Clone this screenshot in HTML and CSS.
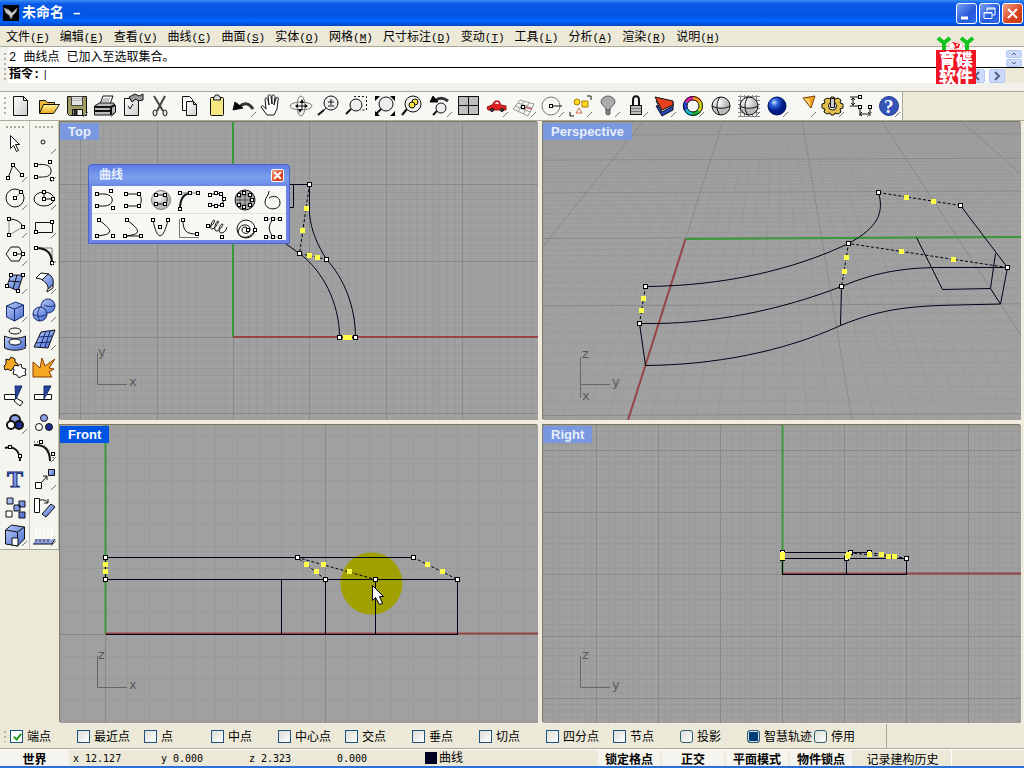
FILE: index.html
```html
<!DOCTYPE html>
<html lang="zh-CN">
<head>
    <meta charset="UTF-8">
    <meta name="viewport" content="width=device-width, initial-scale=1.0">
    <title>未命名</title>
    <link rel="stylesheet" href="styles.css">
</head>
<body>
    <svg class="defs" width="0" height="0">
        <defs>
            <rect id="pt" x="-1.5" y="-1.5" width="3" height="3" fill="#fff" stroke="#000"/>
            <rect id="handle" x="-2" y="-2" width="4" height="4" fill="#fff" stroke="#000" shape-rendering="crispEdges"/>
            <rect id="sel" x="-2" y="-2" width="5" height="5" fill="#ffff4a" stroke="none"/>
            <linearGradient id="blue" x2="1" y2="1"><stop offset="0" stop-color="#b9cbf8"/><stop offset="1" stop-color="#4a6cd0"/></linearGradient>
            <linearGradient id="paper" x2="1" y2="1"><stop offset="0" stop-color="#fff"/><stop offset="1" stop-color="#ccc"/></linearGradient>
            <linearGradient id="gold" x2="0" y2="1"><stop offset="0" stop-color="#fff39a"/><stop offset="1" stop-color="#f2a818"/></linearGradient>
            <radialGradient id="ball" cx=".35" cy=".3"><stop offset="0" stop-color="#fff"/><stop offset="1" stop-color="#bbb"/></radialGradient>
            <radialGradient id="blueball" cx=".35" cy=".3"><stop offset="0" stop-color="#cfe0ff"/><stop offset=".4" stop-color="#2f62e0"/><stop offset="1" stop-color="#001a80"/></radialGradient>
        </defs>
    </svg>

    <header class="titlebar">
        <svg class="app-icon" width="16" height="16"><rect width="16" height="16" fill="#000" stroke="none"/><path d="M1 3l5 2 3 3 5-5-1 4-3 3-2 4-2-4-3-2z" fill="#ccc" stroke="#777"/></svg>
        <h1>未命名 –</h1>
        <div class="window-buttons">
            <button aria-label="最小化"><svg width="19" height="19"><path d="M4 14h7" stroke="#fff" stroke-width="3"/></svg></button>
            <button aria-label="还原"><svg width="19" height="19"><path d="M7 7V4h8v7h-3M7 5h8M4 8.5h8v6H4zM4 9h8" stroke="#fff"/></svg></button>
            <button class="close" aria-label="关闭"><svg width="19" height="19"><path d="M5 5l9 9M14 5l-9 9" stroke="#fff" stroke-width="2"/></svg></button>
        </div>
    </header>

    <nav class="menubar">
        <a href="#">文件<span>(<u>F</u>)</span></a>
        <a href="#">编辑<span>(<u>E</u>)</span></a>
        <a href="#">查看<span>(<u>V</u>)</span></a>
        <a href="#">曲线<span>(<u>C</u>)</span></a>
        <a href="#">曲面<span>(<u>S</u>)</span></a>
        <a href="#">实体<span>(<u>O</u>)</span></a>
        <a href="#">网格<span>(<u>M</u>)</span></a>
        <a href="#">尺寸标注<span>(<u>D</u>)</span></a>
        <a href="#">变动<span>(<u>T</u>)</span></a>
        <a href="#">工具<span>(<u>L</u>)</span></a>
        <a href="#">分析<span>(<u>A</u>)</span></a>
        <a href="#">渲染<span>(<u>R</u>)</span></a>
        <a href="#">说明<span>(<u>H</u>)</span></a>
    </nav>

    <section class="command">
        <div class="grip"></div>
        <div class="command-lines">
            <div class="history">
                <p>2 曲线点 已加入至选取集合。</p>
                <div class="spin">
                    <button aria-label="上"><svg width="14" height="6"><path d="M5 4l2-2 2 2" stroke="#4d6185"/></svg></button>
                    <button aria-label="下"><svg width="14" height="6"><path d="M5 2l2 2 2-2" stroke="#4d6185"/></svg></button>
                </div>
            </div>
            <div class="prompt">
                <label for="cmd">指令:</label>
                <input type="text" id="cmd" value="|">
                <button aria-label="左"><svg width="14" height="12"><path d="M9 2L5 6l4 4" stroke="#4d6185" stroke-width="2"/></svg></button>
                <button aria-label="右"><svg width="14" height="12"><path d="M5 2l4 4-4 4" stroke="#4d6185" stroke-width="2"/></svg></button>
            </div>
        </div>
        <div class="brand">
            <svg width="40" height="14"><path d="M2 2l6 5 6-5M8 6v8M25 2l6 5 6-5M31 6v8" stroke="#12c41c" stroke-width="4"/><ellipse cx="20" cy="10" rx="7" ry="4" fill="#fff" stroke="#fbb"/><path d="M16 6l8 2-1 4-5 1 1-3z" fill="#e22" stroke="none"/><circle cx="21" cy="9" r="1" fill="#fff" stroke="none"/></svg>
            <strong><span>育碟</span><span>软件</span></strong>
        </div>
    </section>

    <div class="toolbar">
        <div class="grip"></div>
        <button aria-label="新建"><svg><path d="M7.500 4.500h10l4 4v15h-14z" fill="url(#paper)"/><path d="M17.500 4.500v4h4"/></svg></button>
        <button aria-label="打开"><svg><path d="M5.500 21V8.500h6l2 2h7V13" fill="#e8b838"/><path d="M5.500 21.500l4-9h16l-6 9z" fill="url(#gold)"/></svg></button>
        <button class="fly" aria-label="保存"><svg><path d="M5.500 4.500h19v19h-17l-2-2z" fill="#a09c62"/><path d="M9.500 4.500h11v9h-11z" fill="#e4e4e4" stroke="#444"/><path d="M10 6.500h10M10 8.500h10" stroke="#bbb"/><path d="M10.500 17.500h10v6h-10z" fill="#eee"/><path d="M12 18h3v5h-3z" fill="#333"/></svg></button>
        <button class="fly" aria-label="打印"><svg><path d="M10 12l3-8h10l-3 8z" fill="#fff"/><path d="M13 7h7M12 9h7" stroke="#888"/><path d="M4.500 14l5-3h14l2 3v6l-4 3h-17z" fill="#bbb"/><path d="M5 15h16v8M5 19h16M21 15l4-2" stroke-width="2"/></svg></button>
        <button aria-label="属性"><svg><path d="M6.500 6.500h14v17h-14z" fill="url(#paper)"/><path d="M11 5l6-3 4 2 4-2v6l-5 1-2-2-4 3z" fill="#999"/><path d="M10 14l2 3 3-5"/></svg></button>
        <button aria-label="剪切"><svg><path d="M8 4l9 15M19 4l-8 15" stroke="#444" stroke-width="2"/><ellipse cx="9" cy="21" rx="2" ry="3"/><ellipse cx="19" cy="21" rx="2" ry="3"/></svg></button>
        <button aria-label="复制"><svg><path d="M8.500 4.500h7l3 3v11h-10z" fill="#fff"/><path d="M12.500 9.500h7l3 3v11h-10z" fill="url(#paper)"/><path d="M19.500 9.500v3h3"/></svg></button>
        <button aria-label="粘贴"><svg><rect x="8.500" y="5.500" width="13" height="18" rx="1" fill="#f7e780"/><path d="M11.500 5h1l1-2h3l1 2h1v3h-7z" fill="#ddd"/></svg></button>
        <button class="fly" aria-label="撤销"><svg><path d="M9 15c5-5 10-4 14 2" stroke="#333" stroke-width="3"/><path d="M3 18l2-8 8 6z" fill="#000"/></svg></button>
        <button aria-label="平移"><svg><path d="M9 23l-6-8c1-2 3-1 5 2L7 7c1-2 2-1 3 1l1 5-1-9c1-2 3-1 3 0l1 8V4c1-2 3-1 3 1l-1 8 2-7c2-1 3 0 2 2l-1 9-3 6z" fill="#fff"/></svg></button>
        <button aria-label="旋转视图"><svg><ellipse cx="15" cy="14" rx="11" ry="4" stroke="#777"/><ellipse cx="15" cy="14" rx="4" ry="10" stroke="#777"/><path d="M16 8v10M11 14h8"/><path d="M16 7l-2 4h4zM14 21l-2-4h4zM9 14l3-2v4zM22 14l-3-2v4z" fill="#000" stroke="none"/></svg></button>
        <button aria-label="缩放"><svg><circle cx="17" cy="11" r="7" fill="#eee"/><path d="M14 10h6M17 7v6M14 14h6"/><path d="M12 16l-2 2"/><path d="M10 18l-6 5" stroke-width="2"/></svg></button>
        <button aria-label="窗口缩放"><svg><path d="M12 4.500h12.500V18H18" stroke-dasharray="2 2"/><circle cx="14" cy="13" r="6" fill="#eee"/><path d="M9 17l-5 5" stroke-width="2"/></svg></button>
        <button aria-label="全部缩放"><svg><circle cx="16" cy="12" r="7" fill="#eee"/><path d="M11 17l-5 5" stroke-width="2"/><path d="M5 4h5l-5 5zM25 4v5l-5-5zM25 24h-5l5-5zM5 24v-5l5 5z" fill="#000" stroke="none"/></svg></button>
        <button aria-label="缩放选取"><svg><circle cx="15" cy="12" r="8" fill="#eee"/><circle cx="17" cy="10" r="3" fill="#f4e43c"/><circle cx="14" cy="13" r="3" fill="#f4e43c"/><path d="M9 17l-5 6" stroke-width="2"/></svg></button>
        <button class="fly" aria-label="恢复视图"><svg><path d="M9 9c4-4 9-3 13 0" stroke="#333" stroke-width="3"/><path d="M4 10l3-6 5 6z" fill="#000"/><circle cx="15" cy="16" r="5" fill="#eee"/><path d="M11 19l-4 4" stroke-width="2"/></svg></button>
        <button aria-label="四视图"><svg><rect x="4.500" y="4.500" width="20" height="18" fill="#bfbfbf"/><path d="M14.500 4v19M4 13.500h21"/></svg></button>
        <button class="fly" aria-label="设置视图"><svg><path d="M5 15l5-2 3-4h4l2 4 5 1v4H6z" fill="#dc2020" stroke="#a01818"/><path d="M13 12l1-2h2l1 2z" fill="#fdd" stroke="none"/><circle cx="10" cy="18" r="1.500" fill="#555"/><circle cx="20" cy="18" r="1.500" fill="#555"/></svg></button>
        <button class="fly" aria-label="工作平面"><svg><path d="M10 8l14 4-6 12-15-7zM8 11l14 5M5 14l15 6M14 9l-6 11M19 11l-6 11" stroke="#999"/><path d="M13 15l9 2" stroke="#c33"/><use href="#pt" x="13" y="15"/></svg></button>
        <button class="fly" aria-label="物件捕捉"><svg><circle cx="13" cy="14" r="9" stroke="#777"/><path d="M13 14h11"/><use href="#pt" x="13" y="14"/></svg></button>
        <button class="fly" aria-label="选取"><svg><circle cx="11" cy="10" r="3" fill="#ffd822" stroke="#b07a00"/><path d="M16 9h6v6h-6z" fill="#ffd822" stroke="#b07a00"/><path d="M10 21l3-5 3 5z" fill="#fff" stroke="#c64"/><path d="M21 4h4v4M4 20v4h4"/></svg></button>
        <button class="fly" aria-label="隐藏"><svg><path d="M12 18c0-3-5-5-5-8a7 6 0 0 1 14 0c0 3-5 5-5 8z" fill="#aaa" stroke="#666"/><path d="M12 18h4v4l-2 1-2-1z" fill="#888" stroke="#555"/></svg></button>
        <button class="fly" aria-label="锁定"><svg><path d="M11 14V8c0-5 6-5 6 0v6" stroke-width="2"/><rect x="8.500" y="13.500" width="11" height="9" fill="#bbb"/><path d="M9 16.500h10M9 19.500h10" stroke="#777"/></svg></button>
        <button class="fly" aria-label="图层"><svg><path d="M6 14l6 10 11-6v-6z" fill="#2847b8"/><path d="M6 9l6 11 11-6v-4z" fill="#fff"/><path d="M5 5l18 4v4l-11 5z" fill="#e8401c"/></svg></button>
        <button class="fly" aria-label="颜色"><svg stroke-width="4"><path d="M15 6a8 8 0 0 1 7 4" stroke="#ff9416"/><path d="M22 10a8 8 0 0 1-1 9" stroke="#d4dc18"/><path d="M21 19a8 8 0 0 1-7 3" stroke="#1caa32"/><path d="M14 22a8 8 0 0 1-6-4" stroke="#17b9cd"/><path d="M8 18a8 8 0 0 1 0-8" stroke="#2346dc"/><path d="M8 10a8 8 0 0 1 7-4" stroke="#d81ca0"/><circle cx="15" cy="14" r="9.500" stroke-width="1"/><circle cx="15" cy="14" r="6" stroke-width="1"/></svg></button>
        <button aria-label="着色"><svg><circle cx="15" cy="14" r="9" fill="url(#ball)"/><path d="M6 14c5 3 13 3 18 0M14 5c-4 5-4 13 0 18"/></svg></button>
        <button class="fly" aria-label="渲染着色"><svg><path d="M4 4.500h22M4 8.500h22M4 12.500h22M4 16.500h22M4 20.500h22M4 24.500h22M6.500 3v22M10.500 3v22M14.500 3v22M18.500 3v22M22.500 3v22" stroke="#888"/><circle cx="15" cy="14" r="9" fill="url(#ball)"/><path d="M6 14c5 3 13 3 18 0M14 5c-4 5-4 13 0 18"/></svg></button>
        <button class="fly" aria-label="渲染"><svg><circle cx="15" cy="14" r="9" fill="url(#blueball)" stroke="#001060"/></svg></button>
        <button class="fly" aria-label="灯光"><svg><path d="M13 6l12-2-4 12z" fill="#f4a020" stroke="#7a4300"/><path d="M14 6l7 9-2-8z" fill="#ffd27a" stroke="none"/></svg></button>
        <button class="fly" aria-label="选项"><svg><path d="M9 6l3 1 1-2h3l1 2 3-1 3 2-1 3 3 1v4l-3 1 1 3-3 2-3-1-1 2h-3l-1-2-3 1-3-2 1-3-3-1v-4l3-1-1-3z" fill="#e2bf4c"/><circle cx="14.500" cy="14" r="4" fill="#eee"/><path d="M12.500 6.500h4v9h-4z" fill="#ccc"/></svg></button>
        <button class="fly" aria-label="尺寸"><svg><path d="M4 5h10M4 14h12M7 6v7M5 8l2-2 2 2M5 11l2 2 2-2M14 15v9M24 15v9M14 22h10M16 20l-2 2 2 2M22 20l2 2-2 2"/><use href="#pt" x="14" y="5"/><use href="#pt" x="14" y="15"/><use href="#pt" x="24" y="15"/></svg></button>
        <button class="fly" aria-label="说明"><svg><circle cx="15" cy="14" r="9.500" fill="#3454b8" stroke="#22388c"/><text x="10" y="21" class="help-mark">?</text></svg></button>
    </div>

    <main class="workspace">
        <aside class="tools">
            <div class="tool-col">
                <div class="grip-h"></div>
                <button aria-label="选取"><svg><path d="M9.500 6.500v13l3-3 3 6 2-1-3-6h4z" fill="#fff"/></svg></button>
                <button class="fly" aria-label="多重直线"><svg><path d="M7 21l5-13 9 10"/><use href="#pt" x="7" y="21"/><use href="#pt" x="12" y="8"/><use href="#pt" x="21" y="18"/></svg></button>
                <button class="fly" aria-label="圆"><svg><circle cx="14" cy="13" r="9"/><path d="M14 13l6-6" stroke="#888"/><use href="#pt" x="14" y="13"/><use href="#pt" x="20" y="7"/></svg></button>
                <button class="fly" aria-label="圆弧"><svg><path d="M8 6v16l14-8" stroke="#888"/><path d="M8 6q11 0 14 8"/><use href="#pt" x="8" y="6"/><use href="#pt" x="22" y="14"/><use href="#pt" x="8" y="22"/></svg></button>
                <button class="fly" aria-label="多边形"><svg><path d="M5 13l5-7h8l4 7-4 7h-8zM14 13h8"/><use href="#pt" x="14" y="13"/><use href="#pt" x="22" y="13"/></svg></button>
                <button class="fly" aria-label="曲面"><svg><path d="M10 6h12l-5 16-11-5z" fill="url(#blue)"/><path d="M16 6l-4 14M8 12l12 1"/><use href="#pt" x="10" y="6"/><use href="#pt" x="22" y="6"/><use href="#pt" x="17" y="22"/><use href="#pt" x="6" y="17"/></svg></button>
                <button class="fly" aria-label="立方体"><svg><path d="M5.500 9l9-4 8 3v11l-9 5-8-4z" fill="url(#blue)" stroke="#132a70"/><path d="M5.500 9l8 3 9-4M13.500 12v12" stroke="#132a70"/></svg></button>
                <button class="fly" aria-label="管"><svg><ellipse cx="14" cy="6" rx="6" ry="3"/><path d="M3.500 11c6 3 15 3 21 0v12c-6 3-15 3-21 0z" fill="url(#blue)"/><ellipse cx="14" cy="17" rx="6" ry="3" fill="#fff"/></svg></button>
                <button aria-label="组合"><svg><path d="M5 6l3 1 2-3 4 2v3l3 2-1 3-4 1-2 3-3-2-3 1-1-4 2-2z" fill="#f5a623"/><path d="M14 12l3 1 3-2 1 4 4 1-1 3 1 3-4 1-3 2-2-3-4-1 1-4-1-2z" fill="#fff"/></svg></button>
                <button aria-label="修剪"><svg><path d="M3.500 13.500h11v5h-11z" fill="#fff"/><path d="M15 17l7 4-3 4-6-5z" fill="#fff"/><path d="M14 5h7l-6 13z" fill="#29459a" stroke="#132a70"/></svg></button>
                <button class="fly" aria-label="群组"><svg><circle cx="14" cy="11" r="5" fill="#8fa0e8" stroke-width="2"/><circle cx="18" cy="16" r="4" fill="#202a90" stroke-width="2"/><circle cx="10" cy="16" r="4" fill="#fff" stroke-width="2"/></svg></button>
                <button aria-label="编辑点"><svg><path d="M4 11c9-3 15 3 15 13" stroke-width="2"/><use href="#pt" x="9" y="10"/><use href="#pt" x="19" y="19"/></svg></button>
                <button aria-label="文字"><svg><text x="6" y="22" class="tool-letter">T</text></svg></button>
                <button aria-label="阵列"><svg><g fill="url(#blue)"><path d="M6 5h6v6H6zM18 8h6v6h-6zM13 12h6v6h-6zM18 19h6v6h-6z"/></g><path d="M5 18h6v6H5z" fill="#fff"/></svg></button>
                <button class="fly" aria-label="布尔运算"><svg><path d="M4.500 9l6-5 13 2v12l-7 7-12-2z" fill="url(#blue)"/><path d="M4.500 9l12 2 7-5M16.500 11v14"/><path d="M11 17h6v8l-6-1z" fill="#fff"/></svg></button>
            </div>
            <div class="tool-col">
                <div class="grip-h"></div>
                <button class="fly" aria-label="点"><svg><circle cx="13" cy="13" r="2"/></svg></button>
                <button class="fly" aria-label="曲线"><svg><path d="M6 8c10-2 16 1 15 7s-8 5-15 5"/><use href="#pt" x="6" y="8"/><use href="#pt" x="20" y="5"/><use href="#pt" x="6" y="20"/><use href="#pt" x="22" y="22"/></svg></button>
                <button class="fly" aria-label="椭圆"><svg><ellipse cx="14" cy="14" rx="10" ry="7"/><path d="M14 7v7h9"/><use href="#pt" x="14" y="14"/><use href="#pt" x="14" y="7"/><use href="#pt" x="23" y="14"/></svg></button>
                <button class="fly" aria-label="矩形"><svg><path d="M5.500 9.500h17v10h-17z"/><use href="#pt" x="22" y="9"/><use href="#pt" x="6" y="19"/></svg></button>
                <button class="fly" aria-label="圆角"><svg><path d="M6 7h16v15" stroke="#777"/><path d="M6 7c11 0 16 5 16 15" stroke-width="2"/><use href="#pt" x="6" y="7"/><use href="#pt" x="22" y="22"/></svg></button>
                <button class="fly" aria-label="挤出曲面"><svg><path d="M6 9l5-5 8 1-4 6z" fill="#fff"/><path d="M12 11l6-6c5 2 6 7 5 11l-5 6c1-5-2-9-6-11z" fill="url(#blue)"/><path d="M17 21v2l6-4v-3z" fill="#fff"/></svg></button>
                <button class="fly" aria-label="球体"><svg><circle cx="18" cy="9" r="7" fill="url(#blue)" stroke="#132a70"/><circle cx="10" cy="17" r="7" fill="url(#blue)" stroke="#132a70"/><path d="M3 17c4 3 10 3 14 0M10 10c-3 5-3 9 0 14M14 8c4 2 8 2 11 0" stroke="#132a70"/></svg></button>
                <button class="fly" aria-label="曲面工具"><svg><path d="M11 7l14-2-7 18-14-1z" fill="url(#blue)"/><path d="M9 12l14-1M6 18l14-1M16 6l-6 16M20 6l-5 16" stroke="#132a70"/></svg></button>
                <button aria-label="炸开"><svg><path d="M3 9l7 6 2-10 3 8 10-7-6 9 5 1-5 3 3 5H3z" fill="#f5a623" stroke="#8a3c00"/></svg></button>
                <button aria-label="分割"><svg><path d="M4.500 13.500h17v5h-17z" fill="#fff"/><path d="M14 5h7l-7 13z" fill="#29459a" stroke="#132a70"/></svg></button>
                <button aria-label="解散群组"><svg><circle cx="14" cy="9" r="3.500" fill="#8fa0e8"/><circle cx="9" cy="18" r="3.500" fill="#fff"/><circle cx="19" cy="18" r="3.500" fill="#202a90"/></svg></button>
                <button class="fly" aria-label="控制点"><svg><path d="M4 8c10-1 16 5 16 16" stroke-width="2"/><path d="M4 5h7l12 12v7" stroke-dasharray="1 2"/><use href="#pt" x="11" y="5"/><use href="#pt" x="23" y="17"/></svg></button>
                <button class="fly" aria-label="移动"><svg><path d="M18.500 4.500h6v6h-6z" fill="url(#blue)"/><path d="M5.500 17.500h6v6h-6z" fill="#fff"/><path d="M12 17l5-6M13 11h4v4"/></svg></button>
                <button aria-label="旋转"><svg><path d="M4.500 5.500h5v14h-5z" fill="#fff"/><path d="M12 21l9-10 4 3-9 10z" fill="url(#blue)"/><path d="M10 7q6-1 8 3M18 6v4h-4"/></svg></button>
                <button class="fly" aria-label="方向"><svg><path d="M6 18h19l-3 5H3z" fill="#8fa0e8" stroke="none"/><path d="M3 23h19l3-5"/><path d="M6 21V8M10 21V8M14 21V8M18 21V8M22 19V8" stroke="#fff"/><path d="M6 21v-3M10 21v-3M14 21v-3M18 21v-3"/></svg></button>
            </div>
        </aside>

        <div class="viewports">
            <section class="viewport">
                <svg class="scene">
                    <g class="grid" data-x="173" data-y="215" data-step="7.64"></g>
                    <path class="axis-g" d="M173 0v215"/><path class="axis-r" d="M173 215H2000"/>
                    <path d="M226 62.500h23.500V92C251 108 257 122 266.500 137.500C284 156 295.500 185 295.500 215.500M233.500 62.500v23H226M224 120.500l15.500 11C262 148 279.500 180 279.500 215.500h16"/>
                    <path class="dash" d="M249.500 62.500l-10 69 27 6"/>
                    <use href="#sel" x="246" y="86"/><use href="#sel" x="242" y="108"/><use href="#sel" x="249" y="133"/><use href="#sel" x="257" y="135"/><use href="#sel" x="285" y="215"/><use href="#sel" x="289" y="215"/>
                    <use href="#handle" x="249.500" y="62.500"/><use href="#handle" x="239.500" y="131.500"/><use href="#handle" x="266.500" y="137.500"/><use href="#handle" x="279.500" y="215.500"/><use href="#handle" x="295.500" y="215.500"/>
                    <g class="ucs"><path d="M37.500 231v31.500H67"/><text x="38" y="234">y</text><text x="69" y="264">x</text></g>
                </svg>
                <h2>Top</h2>
                <div class="palette">
                    <div class="palette-title"><h3>曲线</h3><button class="close" aria-label="关闭"><svg width="11" height="11"><path d="M2 2l7 7M9 2l-7 7" stroke="#fff" stroke-width="2"/></svg></button></div>
                    <div class="palette-body">
                        <button aria-label="控制点曲线"><svg><path d="M5 7h7c11 0 11 12 0 12H5"/><use href="#pt" x="5" y="7"/><use href="#pt" x="19" y="4"/><use href="#pt" x="5" y="19"/><use href="#pt" x="21" y="21"/></svg></button>
                        <button aria-label="内插点曲线"><svg><path d="M6 7h13c3 3 3 9 0 12H6"/><use href="#pt" x="6" y="7"/><use href="#pt" x="19" y="7"/><use href="#pt" x="6" y="19"/><use href="#pt" x="19" y="19"/></svg></button>
                        <button aria-label="曲面上的内插点曲线"><svg><circle cx="14" cy="13" r="9.500" fill="url(#ball)" stroke="#777"/><path d="M9 8h9c3 3 3 6 0 9H9"/><use href="#pt" x="9" y="8"/><use href="#pt" x="18" y="8"/><use href="#pt" x="9" y="17"/><use href="#pt" x="18" y="17"/></svg></button>
                        <button aria-label="控制杆曲线"><svg><path d="M5 22C5 12 8 7 15 6" stroke-width="2"/><path d="M5 6h18" stroke="#777"/><use href="#pt" x="5" y="6"/><use href="#pt" x="15" y="6"/><use href="#pt" x="23" y="6"/><use href="#pt" x="5" y="22"/></svg></button>
                        <button aria-label="描绘"><svg><path d="M7 8l6-2 5 1 3 5-2 6-6 1-6-1"/><use href="#pt" x="7" y="8"/><use href="#pt" x="13" y="6"/><use href="#pt" x="18" y="7"/><use href="#pt" x="21" y="12"/><use href="#pt" x="19" y="18"/><use href="#pt" x="13" y="19"/><use href="#pt" x="7" y="18"/></svg></button>
                        <button aria-label="网格上描绘"><svg><circle cx="14" cy="13" r="10" fill="#aaa"/><path d="M4 13h20M14 3v20M6 8h16M6 18h16M9 4v18M19 4v18" stroke="#555"/><use href="#pt" x="8" y="8"/><use href="#pt" x="13" y="6"/><use href="#pt" x="19" y="8"/><use href="#pt" x="21" y="13"/><use href="#pt" x="19" y="18"/><use href="#pt" x="13" y="20"/><use href="#pt" x="8" y="18"/></svg></button>
                        <button aria-label="手绘曲线"><svg><path d="M11 4c0 5-4 6-4 11 0 9 15 9 15 1 0-7-7-8-11-5"/></svg></button>
                        <button aria-label="圆锥线"><svg><path d="M7 6c12 9 14 13 5 15l-7 1"/><use href="#pt" x="7" y="6"/><use href="#pt" x="5" y="22"/><use href="#pt" x="21" y="22"/></svg></button>
                        <button aria-label="圆锥线起点正切"><svg><path d="M7 6c12 9 14 13 5 15l-7 1h16"/><use href="#pt" x="7" y="6"/><use href="#pt" x="5" y="22"/><use href="#pt" x="21" y="22"/></svg></button>
                        <button aria-label="抛物线"><svg><path d="M6 6c4 21 10 21 15 0"/><use href="#pt" x="6" y="6"/><use href="#pt" x="21" y="6"/><use href="#pt" x="13" y="13"/></svg></button>
                        <button aria-label="双曲线"><svg><path d="M4.500 5v18.500H24" stroke="#777"/><path d="M8 6c0 11 3 14 14 14"/><use href="#pt" x="8" y="6"/><use href="#pt" x="22" y="20"/></svg></button>
                        <button aria-label="弹簧线"><svg><path d="M5 12c4 2 8-6 6-6s-5 9-2 9 8-8 6-8-5 9-2 10 9-8 6-7-4 9-1 9 5-2 6-6"/><use href="#pt" x="5" y="12"/><use href="#pt" x="19" y="23"/></svg></button>
                        <button aria-label="螺旋线"><svg><path d="M17 16c0-4-6-4-6 0s7 5 8 0-8-8-11-1 4 9 8 8 6-3 8-7"/><circle cx="15" cy="15" r="9"/><use href="#pt" x="17" y="16"/><use href="#pt" x="24" y="16"/></svg></button>
                        <button aria-label="混接曲线"><svg><path d="M8 5h14M8 23h14" stroke="#999"/><path d="M15 5c-5 7-5 11 0 18"/><use href="#pt" x="8" y="5"/><use href="#pt" x="15" y="5"/><use href="#pt" x="22" y="5"/><use href="#pt" x="8" y="23"/><use href="#pt" x="15" y="23"/><use href="#pt" x="22" y="23"/></svg></button>
                    </div>
                </div>
            </section>

            <section class="viewport">
                <svg class="scene">
                    <g class="grid-persp"></g>
                    <path class="axis-g" d="M142.500 117L477 115h900"/><path class="axis-r" d="M142.500 117L85 298"/>
                    <path d="M335.500 70.500C341 90 336 105 305.500 121.500C250 148 180 164 102.500 164.500M96.500 201.500C170 203 240 187 298.500 164.500C335 149 365 145.500 400 145.500H464.500L457.500 182L414 183C370 184 340 186 297.500 203.500C240 230 170 243 102.500 243.500L96.500 201.500M298.500 164.500l-1 39M417.500 83.500l47 62M452.500 131.500l-5 35 10 15.500M373.500 115.500L399.500 167.500l48-1"/>
                    <path class="dash" d="M335.500 70.500l82 13M464.500 145.500l-159-24-7 43M102.500 164.500l-6 37"/>
                    <use href="#sel" x="363" y="75"/><use href="#sel" x="390" y="79"/><use href="#sel" x="358" y="129"/><use href="#sel" x="410" y="137"/><use href="#sel" x="303" y="135"/><use href="#sel" x="301" y="149"/><use href="#sel" x="100" y="176"/><use href="#sel" x="98" y="188"/>
                    <use href="#handle" x="335.500" y="70.500"/><use href="#handle" x="417.500" y="83.500"/><use href="#handle" x="305.500" y="121.500"/><use href="#handle" x="464.500" y="145.500"/><use href="#handle" x="298.500" y="164.500"/><use href="#handle" x="102.500" y="164.500"/><use href="#handle" x="96.500" y="201.500"/>
                    <g class="ucs"><path d="M37.500 235v41M37 262.500h30"/><text x="39" y="236">z</text><text x="69" y="264">y</text><text x="39" y="278">x</text></g>
                </svg>
                <h2>Perspective</h2>
            </section>

            <section class="viewport active">
                <svg class="scene">
                    <g class="grid" data-x="45" data-y="209" data-step="22"></g>
                    <path class="axis-g" d="M45.500 0v209"/><path class="axis-r" d="M45.500 208.500H2000"/>
                    <circle cx="311.500" cy="158.500" r="31" fill="#a0a000" stroke="none"/>
                    <path class="crisp" d="M45.500 132.500h308M45.500 154.500h352v55h-352M45.500 132.500v22M221.500 154.500v55M265.500 154.500v55M315.500 154.500v55"/>
                    <path class="dash" d="M265.500 154.500l-28-22 78 22M353.500 132.500l44 22"/>
                    <use href="#sel" x="45" y="139"/><use href="#sel" x="45" y="146"/><use href="#sel" x="246" y="139"/><use href="#sel" x="256" y="146"/><use href="#sel" x="263" y="139"/><use href="#sel" x="289" y="146"/><use href="#sel" x="367" y="139"/><use href="#sel" x="382" y="146"/>
                    <use href="#handle" x="45.500" y="132.500"/><use href="#handle" x="45.500" y="154.500"/><use href="#handle" x="237.500" y="132.500"/><use href="#handle" x="265.500" y="154.500"/><use href="#handle" x="315.500" y="154.500"/><use href="#handle" x="353.500" y="132.500"/><use href="#handle" x="397.500" y="154.500"/>
                    <path d="M312.500 160.500v15l3-3 4 7 3-1-3-7h4z" fill="#fff"/>
                    <g class="ucs"><path d="M37.500 231v31.500H67"/><text x="38" y="234">z</text><text x="69" y="264">x</text></g>
                </svg>
                <h2>Front</h2>
            </section>

            <section class="viewport">
                <svg class="scene">
                    <g class="grid" data-x="239" data-y="149" data-step="6.2"></g>
                    <path class="axis-g" d="M239.500 0v149"/><path class="axis-r" d="M239.500 148.500H2000"/>
                    <path class="crisp" d="M239.500 127.500h87M239.500 133.500h124v16h-124v-22M303.500 133.500v16"/>
                    <path class="dash" d="M303.500 133l4-5 56 5M326.500 127.500l37 6"/>
                    <use href="#handle" x="239.500" y="127.500"/><use href="#handle" x="239.500" y="133.500"/><use href="#handle" x="307.500" y="127.500"/><use href="#handle" x="303.500" y="133.500"/><use href="#handle" x="326.500" y="127.500"/><use href="#handle" x="363.500" y="133.500"/>
                    <use href="#sel" x="239" y="129"/><use href="#sel" x="239" y="132"/><use href="#sel" x="305" y="129"/><use href="#sel" x="304" y="131"/><use href="#sel" x="326" y="129"/><use href="#sel" x="338" y="129"/><use href="#sel" x="345" y="131"/><use href="#sel" x="351" y="131"/>
                    <g class="ucs"><path d="M37.500 231v31.500H67"/><text x="39" y="234">z</text><text x="69" y="264">y</text></g>
                </svg>
                <h2>Right</h2>
            </section>
        </div>
    </main>

    <div class="osnap">
        <div class="grip"></div>
        <label><input type="checkbox" checked><span>端点</span></label>
        <label><input type="checkbox"><span>最近点</span></label>
        <label><input type="checkbox"><span>点</span></label>
        <label><input type="checkbox"><span>中点</span></label>
        <label><input type="checkbox"><span>中心点</span></label>
        <label><input type="checkbox"><span>交点</span></label>
        <label><input type="checkbox"><span>垂点</span></label>
        <label><input type="checkbox"><span>切点</span></label>
        <label><input type="checkbox"><span>四分点</span></label>
        <label><input type="checkbox"><span>节点</span></label>
        <label><input type="checkbox" class="round"><span>投影</span></label>
        <label><input type="checkbox" class="round" checked><span>智慧轨迹</span></label>
        <label><input type="checkbox" class="round"><span>停用</span></label>
    </div>

    <footer class="status">
        <button class="on plane">世界</button>
        <span class="coord">x 12.127</span>
        <span class="coord">y 0.000</span>
        <span class="coord">z 2.323</span>
        <span class="coord">0.000</span>
        <span class="layer"><i></i><span>曲线</span></span>
        <button class="on">锁定格点</button>
        <button class="on">正交</button>
        <button class="on">平面模式</button>
        <button class="on">物件锁点</button>
        <button class="record">记录建构历史</button>
    </footer>

    <script src="script.js"></script>
</body>
</html>
```
FILE: styles.css
```css
* { box-sizing: border-box; }
body {
    margin: 0;
    height: 100vh;
    display: flex;
    flex-direction: column;
    overflow: hidden;
    background: #ece9d8;
    color: #000;
    font: 12px/16px "Liberation Mono", "Noto Sans CJK SC", monospace;
    border-bottom: 2px solid #2b71d9;
}
h1, h2, h3, p { margin: 0; font-weight: normal; }
button { border: 0; padding: 0; margin: 0; background: none; font: inherit; color: inherit; position: relative; }
svg { display: block; fill: none; stroke: #111; }
.defs { position: absolute; }

/* title bar */
.titlebar {
    flex: none;
    height: 26px;
    display: flex;
    align-items: center;
    padding: 0 1px 0 3px;
    background: linear-gradient(#3c8cf5, #0a5be6 15%, #0055e3 60%, #0066ff 80%, #0046c0);
}
.titlebar h1 { flex: 1; padding-left: 3px; color: #fff; font-size: 14px; line-height: 20px; font-weight: bold; }
.window-buttons { display: flex; gap: 2px; }
.window-buttons button { width: 21px; height: 21px; border: 1px solid #fff; border-radius: 3px; background: linear-gradient(135deg, #7ba2f4, #2458d8 60%, #2f6bf0); }
button.close { background: linear-gradient(135deg, #f0a088, #d9431f 60%, #c33a14); }

/* menu */
.menubar { flex: none; height: 21px; display: flex; padding: 2px 1px 0; border-bottom: 1px solid #aca899; }
.menubar a { padding: 0 5px; line-height: 20px; color: #000; text-decoration: none; white-space: nowrap; }
.menubar span { font-size: 11px; }

/* command area */
.command { flex: none; height: 44px; display: flex; position: relative; padding-bottom: 8px; background: #f1f0ea; }
.command .grip { margin: 6px 2px 2px 4px; }
.grip { flex: none; width: 2px; margin: 6px 2px 6px 4px; background: repeating-linear-gradient(#b5b2a2 0 2px, transparent 2px 5px); }
.command-lines { flex: 1; background: #fff; }
.history { height: 21px; display: flex; justify-content: space-between; border-bottom: 1px solid #000; }
.history p { padding-left: 1px; line-height: 23px; }
.spin { display: flex; flex-direction: column; gap: 1px; padding: 3px 2px 0 0; }
.spin button, .prompt button { border: 1px solid #b4c8f4; border-radius: 2px; background: #cbdafb; }
.spin button { width: 16px; height: 8px; }
.prompt { height: 15px; display: flex; align-items: center; padding-right: 19px; background: linear-gradient(to left, #ece9d8 19px, #fff 19px); }
.prompt label { font-weight: bold; line-height: 15px; padding-left: 1px; }
.prompt input { flex: 1; min-width: 0; height: 14px; padding: 0 2px; border: 0; font: inherit; font-size: 10px; }
.prompt button { width: 16px; height: 14px; margin-left: 4px; }
.brand { position: absolute; right: 48px; top: -11px; width: 40px; z-index: 2; }
.brand strong { display: grid; background: #f01424; color: #fff; font: 900 17px/17px "Noto Sans CJK SC", sans-serif; text-align: center; }

/* icon bars */
.toolbar { flex: none; height: 30px; display: flex; border: solid #aca899; border-width: 1px 0; background: linear-gradient(to right, #f7f7f4 902px, #aca899 902px 903px, #ece9d8 903px); }
.toolbar .grip { margin: 5px 0 5px 4px; }
.toolbar button, .tool-col button { flex: none; width: 28px; height: 28px; }
.toolbar svg, .tool-col svg { width: 28px; height: 28px; }
.fly::after { content: ""; position: absolute; right: 2px; bottom: 3px; width: 5px; height: 5px; background: linear-gradient(135deg, transparent 45%, #777 45% 58%, transparent 58%); }
.help-mark { font: bold 19px "Liberation Serif", serif; fill: #fff; stroke: none; }
.tool-letter { font: bold 24px "Liberation Serif", serif; fill: #7c96e6; stroke: #132a70; }

.workspace { flex: 1; min-height: 0; display: flex; }
.tools { flex: none; align-self: flex-start; display: flex; width: 59px; border-bottom: 1px solid #aca899; background: #f5f5f0; }
.tool-col { display: flex; flex-direction: column; width: 30px; padding-left: 1px; border-right: 1px solid #c5c2b4; }
.tool-col:last-child { width: 29px; padding: 0; }
.grip-h { height: 2px; margin: 5px 5px 1px; background: repeating-linear-gradient(to right, #aaa898 0 2px, transparent 2px 4px); }

/* viewports */
.viewports { flex: 1; min-width: 0; display: grid; grid-template: 1fr 1fr / 1fr 1fr; gap: 5px; padding: 1px 3px 1px 1px; background: #f0edde; }
.viewport { position: relative; min-height: 0; background: #a0a0a0; box-shadow: -1px -1px 0 #7d7967; }
.viewport h2 { position: absolute; left: 0; top: 1px; padding: 0 8px; background: #7a98e0; color: #e6eefc; font: bold 13px/17px "Liberation Sans", sans-serif; }
.viewport.active h2 { background: #0054e3; color: #fff; }
.scene { position: absolute; width: 100%; height: 100%; stroke: #000018; }
.minor, .major, .crisp { shape-rendering: crispEdges; }
.minor { stroke: #999; }
.major { stroke: #898989; }
.grid-persp path { shape-rendering: auto; }
.axis-g { stroke: #3a993a; stroke-width: 2; }
.axis-r { stroke: #964444; stroke-width: 2; }
.dash { stroke-dasharray: 3 2; }
.ucs { stroke: #666; }
.ucs text { stroke: none; fill: #5a5a5a; font: 13px "DejaVu Sans", sans-serif; }

/* floating curve palette */
.palette { position: absolute; left: 28px; top: 42px; width: 202px; padding: 0 3px 3px; border: 1px solid #4c62c8; border-radius: 4px 4px 0 0; background: #6f84e4; }
.palette-title { height: 21px; display: flex; align-items: center; justify-content: space-between; margin: 0 -3px; padding: 0 5px 0 10px; border-radius: 4px 4px 0 0; background: linear-gradient(#5f7ce4, #7ba0ee 60%, #6c88e6); }
.palette-title h3 { color: #e6eefc; font-weight: bold; font-size: 12px; }
.palette-title .close { width: 13px; height: 13px; border: 1px solid #fff; border-radius: 2px; }
.palette-body { display: grid; grid-template-columns: repeat(7, 1fr); background: #f7f7f4; }
.palette-body button { height: 27px; }
.palette-body button:nth-child(n+8) { border-top: 1px solid #e4e2d8; }
.palette-body svg { width: 27px; height: 26px; }

/* object snaps */
.osnap { flex: none; height: 24px; display: flex; align-items: center; background: linear-gradient(to right, transparent 886px, #aca899 886px 887px, transparent 887px); }
.osnap .grip { align-self: stretch; margin: 7px 4px 6px 4px; }
.osnap label { flex: none; width: 67px; display: flex; align-items: center; gap: 4px; white-space: nowrap; }
.osnap label span { padding-top: 3px; }
.osnap input { appearance: none; flex: none; width: 13px; height: 13px; margin: 0; border: 1px solid #1d5281; background: linear-gradient(135deg, #dcdcd7, #fff); }
.osnap input:checked { position: relative; background: #fff; }
.osnap input:checked::after { content: ""; position: absolute; left: 4px; top: 1px; width: 3px; height: 6px; border: solid #21a121; border-width: 0 2px 2px 0; transform: rotate(40deg); }
.osnap input.round { border-radius: 3px; border-color: #2f5a6c; }
.osnap input.round:checked { background: #003c74; box-shadow: inset 0 0 0 1px #cde; }
.osnap input.round:checked::after { content: none; }

/* status bar */
.status { flex: none; height: 18px; display: flex; align-items: center; border-top: 1px solid #aca899; box-shadow: inset 0 1px 0 #fff; }
.status button { flex: none; width: 62px; height: 16px; margin-right: 2px; padding-top: 3px; line-height: 16px; white-space: nowrap; }
.status button.on { background: #f5f4ee; font-weight: bold; }
.status button.plane { width: 69px; margin-right: 4px; }
.status button.record { width: 98px; margin-right: 72px; border-right: 1px solid #fff; }
.coord { flex: none; width: 88px; padding-top: 3px; font: 10px/16px "DejaVu Sans Mono", monospace; }
.layer { flex: 1; display: flex; align-items: center; gap: 2px; }
.layer span { padding-top: 3px; }
.layer i { width: 12px; height: 12px; background: #000020; }
```
FILE: script.js
```javascript
const NS = 'http://www.w3.org/2000/svg';

function addPath(parent, d, cls) {
    const p = document.createElementNS(NS, 'path');
    p.setAttribute('d', d);
    p.setAttribute('class', cls);
    parent.appendChild(p);
}

// flat construction plane, every tenth line is a major one
document.querySelectorAll('.grid').forEach(g => {
    const ox = Number(g.dataset.x), oy = Number(g.dataset.y), step = Number(g.dataset.step);
    const w = g.ownerSVGElement.clientWidth, h = g.ownerSVGElement.clientHeight;
    let minor = '', major = '';

    for (let i = Math.ceil(-ox / step); ox + i * step < w; i++) {
        const line = `M${Math.round(ox + i * step) + 0.5} 0V${h}`;
        if (i % 10 === 0) major += line; else minor += line;
    }
    for (let i = Math.ceil(-oy / step); oy + i * step < h; i++) {
        const line = `M0 ${Math.round(oy + i * step) + 0.5}H${w}`;
        if (i % 10 === 0) major += line; else minor += line;
    }
    addPath(g, minor, 'minor');
    addPath(g, major, 'major');
});

// perspective plane: one vanishing point above the view, rows stay almost level
document.querySelectorAll('.grid-persp').forEach(g => {
    const w = g.ownerSVGElement.clientWidth, h = g.ownerSVGElement.clientHeight;
    const vx = 232, vy = -165;
    let minor = '', major = '';

    for (let i = -80; i <= 80; i++) {
        const x = 85 + 22.4 * i;
        const k = (h - vy) / (298 - vy);
        const line = `M${vx} ${vy}L${vx + (x - vx) * k} ${h}`;
        if (i % 10 === 0) major += line; else minor += line;
    }
    for (let j = -20; j <= 38; j++) {
        const y = 1 / (0.003559 + 0.0000688 * j) + vy;
        const line = `M0 ${y + 0.5}L${w} ${y - 1.5}`;
        if (j % 10 === 0) major += line; else minor += line;
    }
    addPath(g, minor, 'minor');
    addPath(g, major, 'major');
});
```
